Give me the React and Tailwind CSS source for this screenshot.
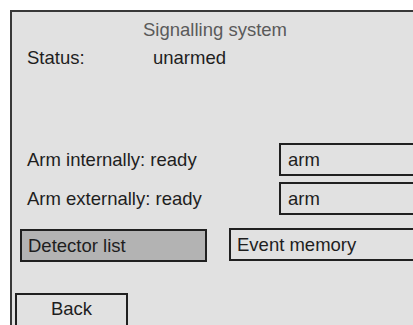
import React from 'react';

export default function App() {
  return (
    <div className="w-[413px] h-[325px] bg-white overflow-hidden" style={{ fontFamily: '"Liberation Sans", Arial, sans-serif' }}>
      <div className="ml-[10px] mt-[10px] w-[408px] h-[330px] border-l-2 border-t-2 border-[#383838] bg-[#e1e1e1] text-[18.5px] leading-[20px] text-[#1e1e1e]">
        <div className="pt-[8px] text-center text-[#5a5a5a]">Signalling system</div>

        <div className="mt-[8px] flex pl-[15px]">
          <span className="w-[126px] shrink-0">Status:</span>
          <span>unarmed</span>
        </div>

        <div className="mt-[75px] flex h-[33px] items-center">
          <span className="w-[267px] shrink-0 pl-[15px]">Arm internally: ready</span>
          <div className="flex h-[33px] w-[150px] shrink-0 items-center border-2 border-[#202020] pl-[7px]">arm</div>
        </div>

        <div className="mt-[6px] flex h-[33px] items-center">
          <span className="w-[267px] shrink-0 pl-[15px]">Arm externally: ready</span>
          <div className="flex h-[33px] w-[150px] shrink-0 items-center border-2 border-[#202020] pl-[7px]">arm</div>
        </div>

        <div className="mt-[14px] flex items-start pl-[8px]">
          <div className="flex h-[33px] w-[187px] shrink-0 items-center border-2 border-[#202020] bg-[#b3b3b3] pl-[6px]">Detector list</div>
          <div className="ml-[22px] -mt-[1px] flex h-[33px] w-[200px] shrink-0 items-center border-2 border-[#202020] pl-[6px]">Event memory</div>
        </div>

        <div className="mt-[31px] pl-[3px]">
          <div className="flex h-[40px] w-[113px] items-start justify-center border-2 border-[#202020] pt-[4px]">Back</div>
        </div>
      </div>
    </div>
  );
}
